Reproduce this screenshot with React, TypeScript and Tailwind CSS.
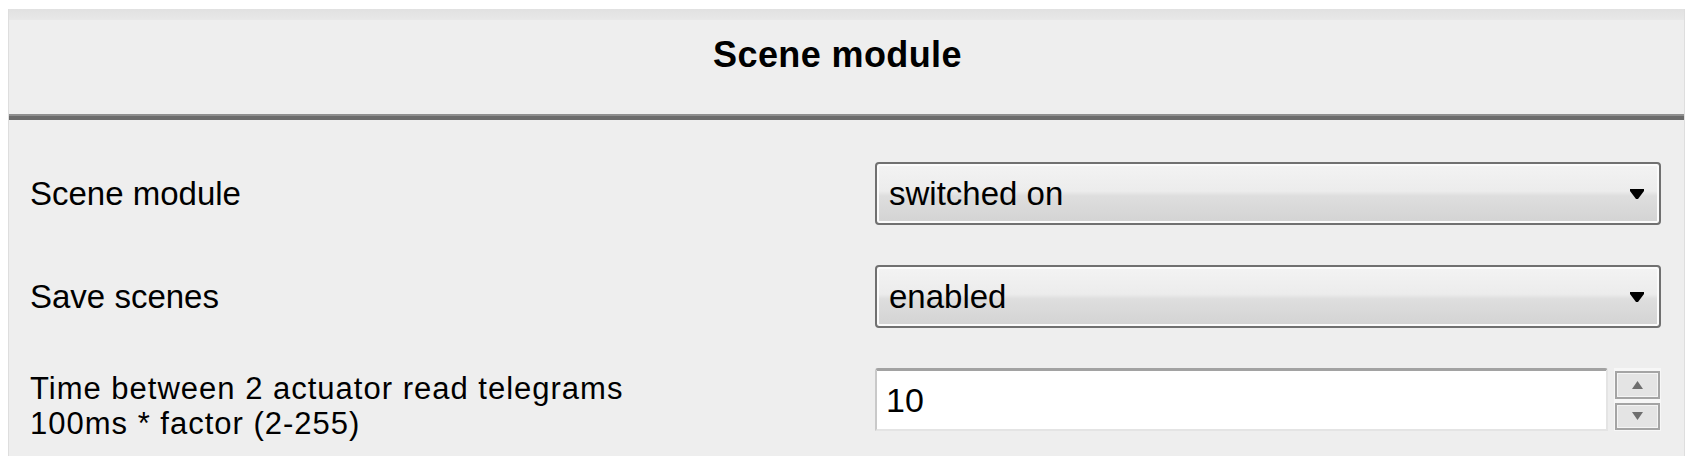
import React from 'react'

const font = { fontFamily: '"Liberation Sans", Arial, sans-serif' }

function ComboArrow() {
  return (
    <svg width="14" height="10" viewBox="0 0 14 10" className="shrink-0">
      <polygon points="0,0 14,0 14,2 8,10 6,10 0,2" fill="#000" />
    </svg>
  )
}

function Combo({ value }: { value: string }) {
  return (
    <div className="flex h-[63px] items-center justify-between rounded-[4px] border-2 border-[#707070] bg-[linear-gradient(to_bottom,#f3f3f3_0%,#ececec_46%,#dedede_54%,#d3d3d3_100%)] pl-[12px] pr-[15px] shadow-[inset_0_0_0_2px_#fbfbfb]">
      <span className="text-[33px] leading-[38px] text-black">{value}</span>
      <ComboArrow />
    </div>
  )
}

function SpinButton({ up }: { up?: boolean }) {
  return (
    <div className="flex flex-1 items-center justify-center border-2 border-[#a4a4a4] bg-[#e4e4e4] shadow-[inset_0_0_0_1px_#f4f4f4]">
      <svg width="11" height="8" viewBox="0 0 11 8">
        <polygon points={up ? '5.5,0 11,8 0,8' : '0,0 11,0 5.5,8'} fill="#6e6e6e" />
      </svg>
    </div>
  )
}

function NumberField({ value }: { value: string }) {
  return (
    <div className="flex h-[63px] gap-[6px]">
      <div className="flex flex-1 items-center rounded-t-[3px] border-2 border-t-[3px] border-t-[#a2a2a2] border-l-[#c9c9c9] border-r-[#e4e4e4] border-b-[#e4e4e4] bg-white pl-[9px]">
        <span className="text-[34px] leading-[38px] text-black">{value}</span>
      </div>
      <div className="flex w-[47px] flex-col gap-[4px] bg-[#f7f7f7] p-[1px] pt-[3px]">
        <SpinButton up />
        <SpinButton />
      </div>
    </div>
  )
}

export default function App() {
  return (
    <div className="h-[461px] w-[1700px] bg-white pl-[8px] pt-[9px]" style={font}>
      <div className="flex h-[447px] w-[1677px] flex-col border-x border-[#dedede] bg-[#eeeeee]">
        <div className="h-[11px] bg-[linear-gradient(to_bottom,#e1e1e1,#e8e8e8)]" />
        <div className="flex h-[94px] justify-center pr-[18px] pt-[15px]">
          <span className="text-[36px] font-bold leading-[40px] tracking-[0.4px] text-black">Scene module</span>
        </div>
        <div className="h-[6px] border-t-2 border-[#8e8e8e] bg-[#6b6b6b]" />

        <div className="grid grid-cols-[1fr_786px] gap-y-[40px] pl-[21px] pr-[23px] pt-[42px] text-black">
          <div className="flex h-[63px] items-center">
            <span className="text-[33px] leading-[38px]">Scene module</span>
          </div>
          <Combo value="switched on" />

          <div className="flex h-[63px] items-center">
            <span className="text-[33px] leading-[38px]">Save scenes</span>
          </div>
          <Combo value="enabled" />

          <div className="h-[63px] pt-[3px]">
            <p className="text-[31px] leading-[35px] tracking-[1px]">Time between 2 actuator read telegrams</p>
            <p className="text-[31px] leading-[35px] tracking-[1px]">100ms * factor (2-255)</p>
          </div>
          <NumberField value="10" />
        </div>
      </div>
    </div>
  )
}
